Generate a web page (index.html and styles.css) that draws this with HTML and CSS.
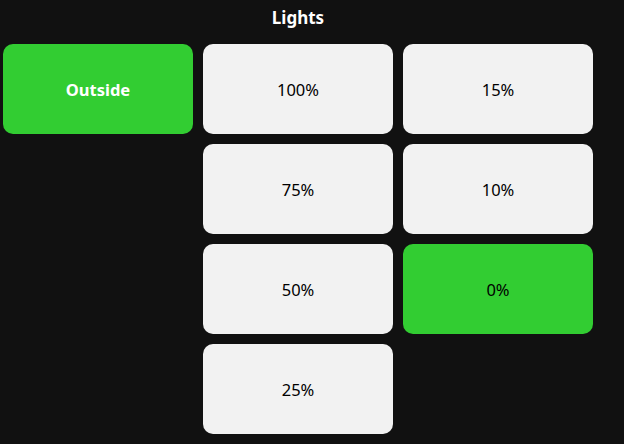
FILE: index.html
```html
<!DOCTYPE html>
<html>
<head>
<meta charset="utf-8">
<link rel="stylesheet" href="styles.css">
</head>
<body>
<div class="panel">
  <div class="title">Lights</div>
  <div class="grid">
    <button class="btn on bold">Outside</button>
    <button class="btn">100%</button>
    <button class="btn">15%</button>
    <div class="empty"></div>
    <button class="btn">75%</button>
    <button class="btn">10%</button>
    <div class="empty"></div>
    <button class="btn">50%</button>
    <button class="btn on">0%</button>
    <div class="empty"></div>
    <button class="btn">25%</button>
  </div>
</div>
</body>
</html>
```
FILE: styles.css
```css
html, body {
  margin: 0;
  padding: 0;
  background: #111111;
  height: 100%;
}
body {
  font-family: "Noto Sans", "Open Sans", sans-serif;
}
.panel {
  width: 590px;
  padding: 0 3px;
}
.title {
  color: #ffffff;
  font-weight: bold;
  font-size: 17px;
  line-height: 24px;
  text-align: center;
  padding-top: 6px;
  height: 38px;
  box-sizing: border-box;
  margin-bottom: 6px;
}
.grid {
  display: grid;
  grid-template-columns: repeat(3, 190px);
  grid-auto-rows: 90px;
  gap: 10px;
}
.btn {
  border: none;
  border-radius: 10px;
  background: #f2f2f2;
  color: #000000;
  font-family: inherit;
  font-size: 16.5px;
  padding: 0;
  margin: 0;
}
.btn.on {
  background: #32cd32;
}
.btn.bold {
  color: #ffffff;
  font-weight: bold;
}
```
